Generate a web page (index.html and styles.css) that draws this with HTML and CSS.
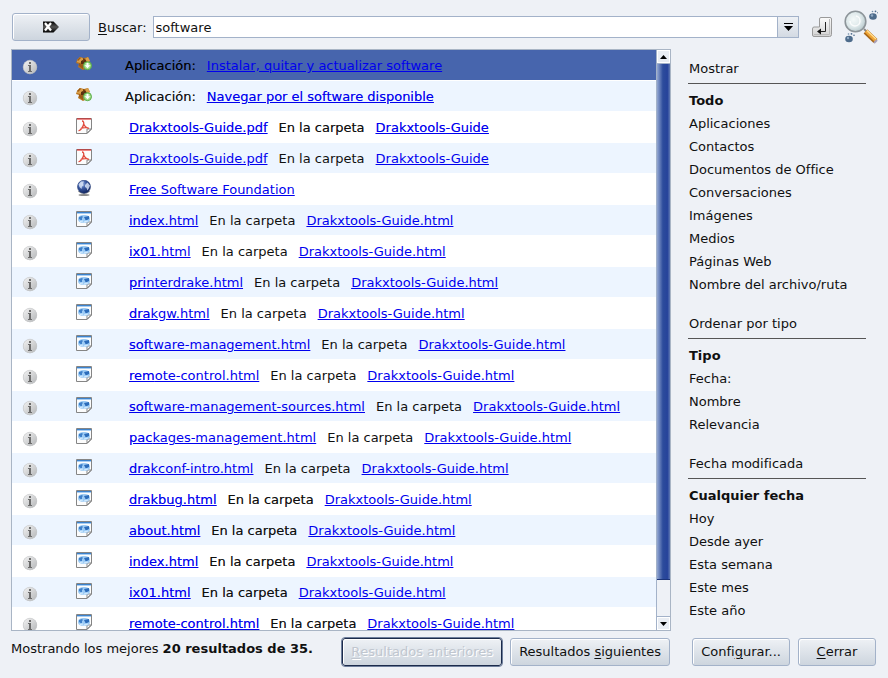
FILE: index.html
```
<!DOCTYPE html>
<html lang="es">
<head>
<meta charset="utf-8">
<title>Buscar</title>
<link rel="stylesheet" href="styles.css">
</head>
<body>
<svg class="defs" aria-hidden="true">
  <defs>
    <linearGradient id="g-info" x1="0" y1="0" x2="1" y2="1"><stop offset="0" stop-color="#f4f4f4"/><stop offset="1" stop-color="#b4b6b8"/></linearGradient>
    <radialGradient id="g-globe" cx=".35" cy=".3" r=".75"><stop offset="0" stop-color="#a9c0e6"/><stop offset=".4" stop-color="#3f5fa8"/><stop offset="1" stop-color="#0c1f58"/></radialGradient>
    <radialGradient id="g-lens" cx=".4" cy=".4" r=".65"><stop offset="0" stop-color="#f4f9f9"/><stop offset=".6" stop-color="#dce7e9"/><stop offset="1" stop-color="#b5c6ca"/></radialGradient>
    <linearGradient id="g-key" x1="0" y1="0" x2="0" y2="1"><stop offset="0" stop-color="#fbfbfb"/><stop offset="1" stop-color="#d2d2d2"/></linearGradient>
    <linearGradient id="g-black" x1="0" y1="0" x2="0" y2="1"><stop offset="0" stop-color="#000"/><stop offset=".5" stop-color="#555"/><stop offset="1" stop-color="#000"/></linearGradient>
    <symbol id="info" viewBox="0 0 16 16">
      <circle cx="8" cy="8.300" r="7" fill="#aaa" opacity=".6"/>
      <circle cx="8" cy="8" r="6.800" fill="url(#g-info)" stroke="#c4c6c8" stroke-width=".5"/>
      <rect x="7" y="3" width="2" height="2" fill="#6c6c6c"/>
      <path d="M6 6h3v6h1v1H6v-1h1V7H6z" fill="#6c6c6c"/>
    </symbol>
    <symbol id="box" viewBox="0 0 16 16">
      <path d="M1 4l3-3 4 1 4-1 2 4-2 1 1 5-6 3-5-3 1-3-3-1z" fill="#b9751f"/>
      <path d="M1 4l3-3 4 2-4 4-3-1zM9 3l3-2 2 4-3 2z" fill="#dca04a"/>
      <path d="M5 5l4-2 2 3-1 3-5-1z" fill="#5a3010"/>
      <path d="M3 7l4 2v4l-4-3zM1 4l3-3 1 1-3 3z" fill="#9a5a18"/>
      <path d="M7 2l2 1-2 3z" fill="#744010"/>
      <circle cx="11.500" cy="9.700" r="4" fill="#a5dc88" stroke="#55ab45"/>
      <path d="M10.500 7h2v2.300h1.800l-2.800 3-2.800-3h1.800z" fill="#fff"/>
    </symbol>
    <symbol id="sheet" viewBox="0 0 16 16">
      <path d="M.5.500h15v10.700l-4.300 4.300H.5z" fill="#fcfcfc" stroke="#858585"/>
      <path d="M11 15v-4h4.300z" fill="#fff" stroke="#858585"/>
    </symbol>
    <symbol id="pdf" viewBox="0 0 16 16">
      <use href="#sheet"/>
      <path d="M1 1h14" stroke="#e01010"/>
      <path d="M6 3c1.500 0 2 1.500 1.700 3C7 9.500 4 13 2.500 12.500M7.700 6c.8 2 2.800 4 5.300 4.300M4.500 10.500C7 9.500 9 9.300 12 9.800" fill="none" stroke="#e04a3c" stroke-width="1.300"/>
    </symbol>
    <symbol id="html" viewBox="0 0 16 16">
      <use href="#sheet"/>
      <path d="M1 1.500h14" stroke="#3c82cc"/>
      <path d="M1 2.500h14" stroke="#a8cdf2"/>
      <path d="M2 8c0-3 2.500-4 6-4s6 1 6 4-2.500 3.800-6 3.800S2 11 2 8z" fill="#9ccbf5"/>
      <path d="M3 6l3-1 1 1-1 1v2H4.500L3 8z" fill="#3e80ca"/>
      <path d="M8 6l5-1v3l-2 1H9.500z" fill="#2c6cba"/>
      <path d="M4 10.500l3-.5M8 11l4-1" stroke="#d9eeff"/>
    </symbol>
    <symbol id="globe" viewBox="0 0 16 16">
      <ellipse cx="8" cy="15" rx="5.500" ry="1" fill="#8a8a8a"/>
      <path d="M2.500 11c3 3 8 3 11 0M8 12.500v2" fill="none" stroke="#8a8a8a" stroke-width="1.500"/>
      <circle cx="8" cy="6.700" r="6.500" fill="url(#g-globe)" stroke="#223a78" stroke-width=".6"/>
      <path d="M2.500 4.500L5 1.500l3 0-1 2 .5 2L6 6.500 5.500 9 3.500 7zM9 5l2.500-2.500L14 5.500 13 8l-1.500 2.500L10.500 8 9 7z" fill="#d5e0f4" opacity=".85"/>
    </symbol>
    <symbol id="paw" viewBox="0 0 10 10">
      <ellipse cx="4" cy="6.500" rx="3.800" ry="3.300" fill="#4d6b8b"/>
      <circle cx="3.500" cy="1.500" r=".8" fill="#6d89a5"/><circle cx="6.500" cy="1.300" r=".9" fill="#4d6b8b"/><circle cx="9" cy="2.800" r=".8" fill="#4d6b8b"/>
      <circle cx="3" cy="5.500" r="1.200" fill="#8fa9c3"/>
    </symbol>
  </defs>
</svg>

<form class="toolbar" onsubmit="return false">
  <button type="button" class="btn clear" aria-label="Limpiar">
    <svg width="16" height="12" viewBox="0 0 16 12"><path d="M0 .500h10.500L16 6l-5.500 5.500H0z" fill="url(#g-black)"/><path d="M2 2l6 7.500M8 2L2 9.500" stroke="#fff" stroke-width="2.200"/></svg>
  </button>
  <label for="query"><u>B</u>uscar:</label>
  <div class="combo">
    <input id="query" type="text" value="software">
    <button type="button" aria-label="Historial">
      <svg width="9" height="8" viewBox="0 0 9 8"><path d="M0 .500h9" stroke="#000"/><path d="M0 3h9L4.500 8z"/></svg>
    </button>
  </div>
  <button type="submit" class="enter" aria-label="Buscar">
    <svg width="20" height="20" viewBox="0 0 20 20"><path d="M9 .500h9q1.500 0 1.500 1.500v15.500q0 2-2 2H2q-1.500 0-1.500-1.500v-6Q.5 10 2 10h5.500V2Q7.500.5 9 .500z" fill="url(#g-key)" stroke="#9a9a9a"/><path d="M2 17.500h15.500V2" fill="none" stroke="#bbb"/><path d="M13.500 5v9.500H8" fill="none" stroke="#222"/><path d="M5 14.500l4-3v6z" fill="#111"/></svg>
  </button>
  <svg class="logo" width="34" height="34" viewBox="0 0 34 34" aria-hidden="true">
    <path d="M20 19l3 3" stroke="#888" stroke-width="2"/>
    <path d="M21.500 21.500l10 9.500" stroke="#a86718" stroke-width="5.500"/>
    <path d="M22 21l10 9.500" stroke="#f0a637" stroke-width="3.600"/>
    <path d="M23 20.500l9 8.500" stroke="#ffe19a" stroke-width="1.200"/>
    <path d="M30 33l3-3" stroke="#a9a0b8" stroke-width="2"/>
    <circle cx="11.500" cy="11.500" r="10.300" fill="url(#g-lens)" stroke="#8d959a" stroke-width="1.600"/>
    <path d="M6 11a5 5 0 1 0 6-5" fill="none" stroke="#fff" stroke-width="1.500" opacity=".8"/>
    <use href="#paw" x="25" y="0" width="10" height="10"/>
    <use href="#paw" x="1" y="22" width="10" height="11"/>
  </svg>
</form>

<div class="content">
  <main class="results">
    <ul class="list">
      <li class="row selected"><svg class="info"><use href="#info"/></svg><svg class="type"><use href="#box"/></svg><span class="kind strong">Aplicación:</span><a href="#">Instalar, quitar y actualizar software</a></li>
      <li class="row"><svg class="info"><use href="#info"/></svg><svg class="type"><use href="#box"/></svg><span class="kind strong">Aplicación:</span><a class="strong" href="#">Navegar por el software disponible</a></li>
      <li class="row"><svg class="info"><use href="#info"/></svg><svg class="type"><use href="#pdf"/></svg><a class="name strong" href="#">Drakxtools-Guide.pdf</a><span class="strong">En la carpeta</span><a class="strong" href="#">Drakxtools-Guide</a></li>
      <li class="row"><svg class="info"><use href="#info"/></svg><svg class="type"><use href="#pdf"/></svg><a class="name" href="#">Drakxtools-Guide.pdf</a><span>En la carpeta</span><a href="#">Drakxtools-Guide</a></li>
      <li class="row"><svg class="info"><use href="#info"/></svg><svg class="type"><use href="#globe"/></svg><a class="name" href="#"><span class="strong">Fre</span>e Software Foundation</a></li>
      <li class="row"><svg class="info"><use href="#info"/></svg><svg class="type"><use href="#html"/></svg><a class="name" href="#"><span class="strong">ind</span>ex.html</a><span>En la carpeta</span><a href="#">Drakxtools-Guide.html</a></li>
      <li class="row"><svg class="info"><use href="#info"/></svg><svg class="type"><use href="#html"/></svg><a class="name" href="#"><span class="strong">ix0</span>1.html</a><span>En la carpeta</span><a href="#">Drakxtools-Guide.html</a></li>
      <li class="row"><svg class="info"><use href="#info"/></svg><svg class="type"><use href="#html"/></svg><a class="name" href="#"><span class="strong">pri</span>nterdrake.html</a><span>En la carpeta</span><a href="#">Drakxtools-Guide.html</a></li>
      <li class="row"><svg class="info"><use href="#info"/></svg><svg class="type"><use href="#html"/></svg><a class="name" href="#"><span class="strong">dra</span>kgw.html</a><span>En la carpeta</span><a href="#">Drakxtools-Guide.html</a></li>
      <li class="row"><svg class="info"><use href="#info"/></svg><svg class="type"><use href="#html"/></svg><a class="name" href="#"><span class="strong">sof</span>tware-management.html</a><span>En la carpeta</span><a href="#">Drakxtools-Guide.html</a></li>
      <li class="row"><svg class="info"><use href="#info"/></svg><svg class="type"><use href="#html"/></svg><a class="name" href="#"><span class="strong">rem</span>ote-control.html</a><span>En la carpeta</span><a href="#">Drakxtools-Guide.html</a></li>
      <li class="row"><svg class="info"><use href="#info"/></svg><svg class="type"><use href="#html"/></svg><a class="name" href="#"><span class="strong">sof</span>tware-management-sources.html</a><span>En la carpeta</span><a href="#">Drakxtools-Guide.html</a></li>
      <li class="row"><svg class="info"><use href="#info"/></svg><svg class="type"><use href="#html"/></svg><a class="name" href="#"><span class="strong">pac</span>kages-management.html</a><span>En la carpeta</span><a href="#">Drakxtools-Guide.html</a></li>
      <li class="row"><svg class="info"><use href="#info"/></svg><svg class="type"><use href="#html"/></svg><a class="name" href="#"><span class="strong">dra</span>kconf-intro.html</a><span>En la carpeta</span><a href="#">Drakxtools-Guide.html</a></li>
      <li class="row"><svg class="info"><use href="#info"/></svg><svg class="type"><use href="#html"/></svg><a class="name strong" href="#">drakbug.html</a><span class="strong">En la carpeta</span><a href="#">Drakxtools-Guide.html</a></li>
      <li class="row"><svg class="info"><use href="#info"/></svg><svg class="type"><use href="#html"/></svg><a class="name strong" href="#">about.html</a><span class="strong">En la carpeta</span><a href="#">Drakxtools-Guide.html</a></li>
      <li class="row"><svg class="info"><use href="#info"/></svg><svg class="type"><use href="#html"/></svg><a class="name strong" href="#">index.html</a><span class="strong">En la carpeta</span><a href="#">Drakxtools-Guide.html</a></li>
      <li class="row"><svg class="info"><use href="#info"/></svg><svg class="type"><use href="#html"/></svg><a class="name strong" href="#">ix01.html</a><span class="strong">En la carpeta</span><a href="#">Drakxtools-Guide.html</a></li>
      <li class="row"><svg class="info"><use href="#info"/></svg><svg class="type"><use href="#html"/></svg><a class="name strong" href="#">remote-control.html</a><span class="strong">En la carpeta</span><a href="#">Drakxtools-Guide.html</a></li>
    </ul>
    <div class="scrollbar">
      <button type="button" aria-label="Subir"><svg width="7" height="4" viewBox="0 0 7 4"><path d="M0 4l3.500-4L7 4z"/></svg></button>
      <div class="track"><div class="thumb"></div></div>
      <button type="button" aria-label="Bajar"><svg width="7" height="4" viewBox="0 0 7 4"><path d="M0 0l3.500 4L7 0z"/></svg></button>
    </div>
  </main>

  <aside class="side">
    <section>
      <h2>Mostrar</h2>
      <a class="current" href="#">Todo</a><a href="#">Aplicaciones</a><a href="#">Contactos</a><a href="#">Documentos de Office</a><a href="#">Conversaciones</a><a href="#">Imágenes</a><a href="#">Medios</a><a href="#">Páginas Web</a><a href="#">Nombre del archivo/ruta</a>
    </section>
    <section>
      <h2>Ordenar por tipo</h2>
      <a class="current" href="#">Tipo</a><a href="#">Fecha:</a><a href="#">Nombre</a><a href="#">Relevancia</a>
    </section>
    <section>
      <h2>Fecha modificada</h2>
      <a class="current" href="#">Cualquier fecha</a><a href="#">Hoy</a><a href="#">Desde ayer</a><a href="#">Esta semana</a><a href="#">Este mes</a><a href="#">Este año</a>
    </section>
  </aside>
</div>

<footer class="footer">
  <div class="pager">
    <p>Mostrando los mejores <b>20 resultados de 35.</b></p>
    <button type="button" class="btn focused" disabled><u>R</u>esultados anteriores</button>
    <button type="button" class="btn">Resultados <u>s</u>iguientes</button>
  </div>
  <div class="actions">
    <button type="button" class="btn configure">Confi<u>g</u>urar...</button>
    <button type="button" class="btn close"><u>C</u>errar</button>
  </div>
</footer>
</body>
</html>
```
FILE: styles.css
```
* {
  box-sizing: border-box;
}

body {
  display: flex;
  flex-direction: column;
  height: 100vh;
  margin: 0;
  padding: 9px 12px 12px 11px;
  background: #eef1f6;
  color: #101010;
  font: 13px/23px "DejaVu Sans", sans-serif;
}

button,
input {
  font: inherit;
  color: inherit;
}

u {
  text-underline-offset: 2px;
}

.defs {
  position: absolute;
  width: 0;
  height: 0;
}

.strong {
  text-shadow: 0 0 0 color-mix(in srgb, currentColor 50%, transparent);
}

.btn {
  display: flex;
  align-items: center;
  justify-content: center;
  height: 28px;
  padding: 0 8px;
  border: 1px solid #a3b2c9;
  border-radius: 3px;
  background: linear-gradient(#eef1f5, #cdd5de);
  box-shadow: inset 1px 1px #fff;
  line-height: 20px;
  white-space: pre;
}

.toolbar {
  display: flex;
  align-items: center;
  height: 36px;
  margin-bottom: 4px;
}

.clear {
  width: 78px;
  margin: 0 8px 0 1px;
}

.combo {
  display: flex;
  flex: 1;
  height: 22px;
  margin: 0 13px 0 6px;
  border: 1px solid #a3b2c9;
  background: #fff;
}

.combo input {
  flex: 1;
  min-width: 0;
  padding: 0 2px;
  border: 0;
  outline: 0;
  background: none;
}

.combo button {
  display: grid;
  place-items: center;
  width: 21px;
  padding: 0;
  border: 0;
  border-left: 1px solid #a3b2c9;
  background: linear-gradient(#eef1f5, #d3dae3);
}

.enter {
  display: flex;
  margin-right: 12px;
  padding: 0;
  border: 0;
  background: none;
}

.logo {
  margin-right: -2px;
}

.content {
  display: flex;
  flex: 1;
  min-height: 0;
}

.results {
  display: flex;
  flex: 1;
  min-width: 0;
  border: 1px solid #a9b5c5;
  background: #fff;
}

.list {
  flex: 1;
  min-width: 0;
  margin: 0;
  padding: 0;
  overflow: hidden;
  list-style: none;
}

.row {
  display: flex;
  height: 31px;
  padding-left: 10px;
  border-bottom: 1px solid #fff;
  line-height: 32px;
  white-space: nowrap;
}

.row:nth-child(even) {
  background: #edf5ff;
  background-clip: padding-box;
}

.row.selected {
  background: #4765ad;
  background-clip: padding-box;
  color: #000;
}

.row a {
  color: #0000ee;
  text-underline-offset: 1px;
}

.row > * + span,
.row > * + a {
  margin-left: 11px;
}

.row > .name {
  margin-left: 37px;
}

.row > .kind {
  margin-left: 33px;
}

.row .info {
  width: 16px;
  height: 16px;
  margin: 9px 38px 0 0;
}

.row .type {
  width: 16px;
  height: 16px;
  margin-top: 6px;
}

.scrollbar {
  display: flex;
  flex-direction: column;
  width: 14px;
  border-left: 1px solid #a3b2c9;
  background: #eef1f6;
}

.scrollbar button {
  display: grid;
  place-items: center;
  height: 13px;
  padding: 0;
  border: 1px solid #fff;
  background: #e9edf3;
}

.track {
  flex: 1;
  border: solid #a3b2c9;
  border-width: 1px 0;
}

.thumb {
  height: 93.5%;
  border-bottom: 1px solid #1c3478;
  background: linear-gradient(90deg, #94a8d2, #2d4c9c 45%, #26439a 80%, #5f78b2);
}

.side {
  width: 205px;
  padding: 8px 10px 0 17px;
}

.side section {
  margin-bottom: 16px;
}

.side h2 {
  margin: 0 0 5px;
  padding-bottom: 3px;
  border-bottom: 1px solid #555;
  font: inherit;
}

.side h2,
.side a {
  padding-left: 1px;
}

.side a {
  display: block;
  color: inherit;
  text-decoration: none;
}

.side .current {
  font-weight: bold;
}

.footer {
  display: flex;
  padding-top: 7px;
}

.pager {
  display: flex;
  flex: 1;
  gap: 8px;
  padding-right: 1px;
}

.pager p {
  flex: 1;
  margin: 0;
  line-height: 21px;
}

.focused {
  border-color: #1c2b4b;
  outline: 1px solid #6f7f9c;
  color: #c0c6cf;
  text-shadow: 1px 1px #fff;
}

.actions {
  display: flex;
  justify-content: flex-end;
  gap: 8px;
  width: 205px;
}

.close {
  width: 78px;
}
```
